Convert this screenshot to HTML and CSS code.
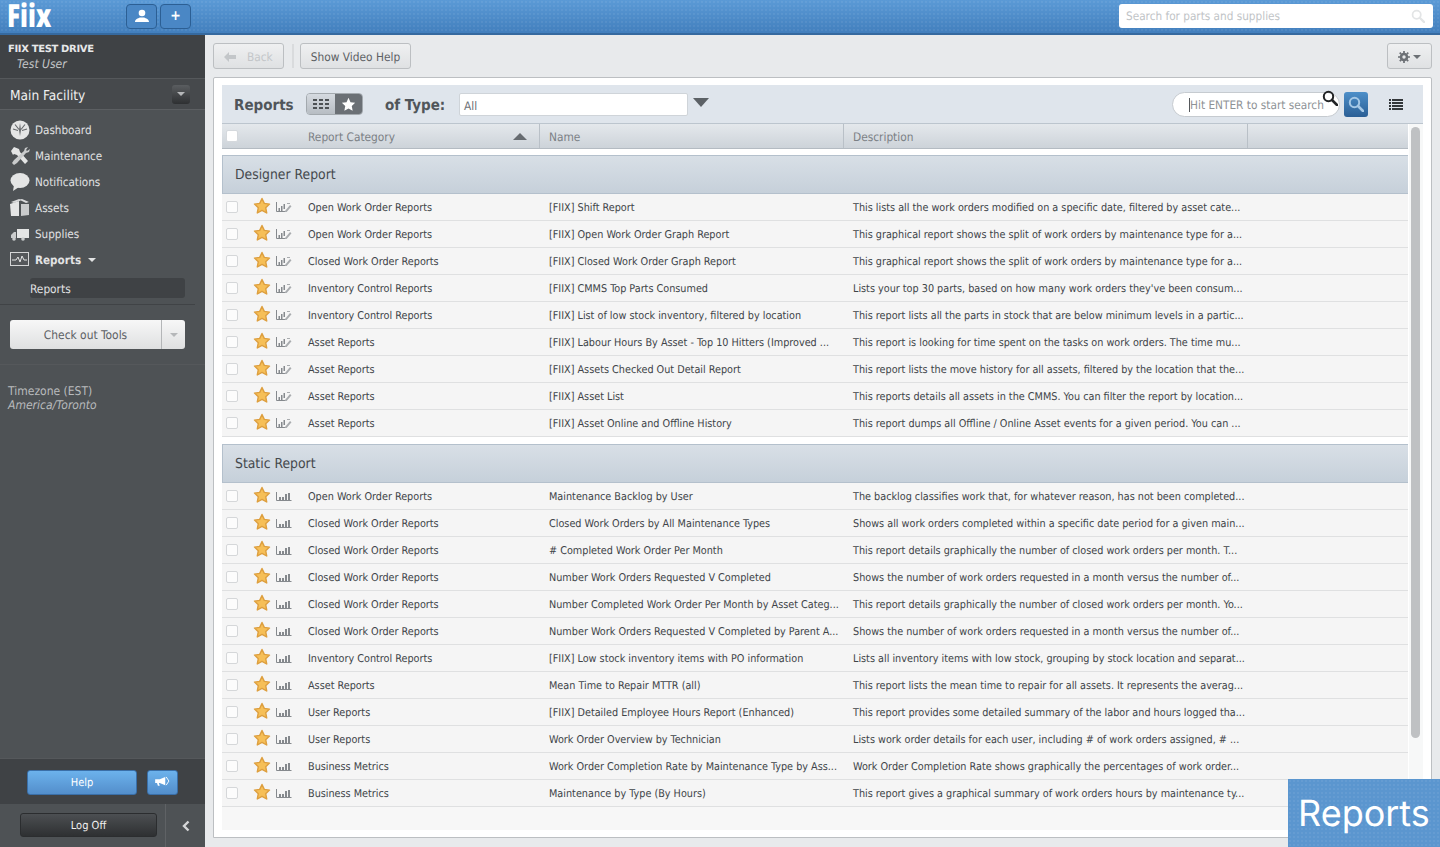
FILE: index.html
```html
<!DOCTYPE html>
<html lang="en">
<head>
<meta charset="UTF-8">
<meta name="viewport" content="width=device-width, initial-scale=1.0">
<title>Reports - Fiix</title>
<link rel="stylesheet" href="styles.css">
</head>
<body>

<svg class="icon-defs" width="0" height="0">
  <symbol id="star" viewBox="0 0 18 18">
    <path d="M9 1.500l2.300 4.900 5.200.7-3.800 3.600 1 5.300L9 13.400 4.300 16l1-5.300-3.800-3.600 5.200-.7z" fill="#f6bf57" stroke="#dd9f3f" stroke-width="1.400" stroke-linejoin="round"/>
  </symbol>
  <symbol id="chart-edit" viewBox="0 0 16 10">
    <path d="M.5 0v9.500h9" fill="none" stroke="#85898d" stroke-width="1"/>
    <path d="M2.500 6h1.500v3H2.500zM5 4h1.500v5H5zM7.500 2h1.500v5H7.500z" fill="#85898d"/>
    <path d="M9 9l5-6 1.500 1.200-5 6-2 .5zM11 1h3v1h-3z" fill="#a9acaf"/>
  </symbol>
  <symbol id="chart" viewBox="0 0 16 10">
    <path d="M.5 1v8.500h15" fill="none" stroke="#85898d" stroke-width="1"/>
    <path d="M3 6h2v3H3zM6 6h2v3H6zM9 3h2v6H9zM12 2h2v7h-2z" fill="#85898d"/>
  </symbol>
  <symbol id="lens" viewBox="0 0 16 16">
    <circle cx="6.500" cy="6.500" r="4.700" fill="none" stroke="currentColor" stroke-width="2"/>
    <path d="M10 10l5 5" stroke="currentColor" stroke-width="2.600" stroke-linecap="round"/>
  </symbol>
</svg>

<header class="topbar">
  <div class="logo-cell"><div class="logo">Fiix</div></div>
  <div class="top-buttons">
    <button class="top-btn">
      <svg width="14" height="14" viewBox="0 0 14 14"><circle cx="7" cy="4" r="3.300" fill="#fff"/><path d="M0 13c0-3 3-3.500 5-4.500h4c2 1 5 1.500 5 4.500z" fill="#fff"/></svg>
    </button>
    <button class="top-btn plus">+</button>
  </div>
  <div class="part-search">
    <span>Search for parts and supplies</span>
    <svg class="part-lens" width="14" height="14"><use href="#lens"/></svg>
  </div>
</header>

<div class="layout">
  <aside class="sidebar">
    <div class="account">
      <div class="account-name">FIIX TEST DRIVE</div>
      <div class="account-user">Test User</div>
    </div>
    <div class="facility">
      <span class="facility-name">Main Facility</span>
      <span class="facility-btn"><i class="caret"></i></span>
    </div>
    <nav class="side-nav">
      <a class="nav-item">
        <svg width="20" height="20" viewBox="0 0 20 20"><circle cx="10" cy="10" r="9.500" fill="#e4e5e5"/><path d="M9 10l1-7 1 7-1 6z" fill="#66696c"/><path d="M5 4.500l4 5M15 4.500l-4 5M3 9l5 1.500M17 9l-5 1.500" stroke="#66696c" stroke-width="1.200"/></svg>
        Dashboard
      </a>
      <a class="nav-item">
        <svg width="20" height="20" viewBox="0 0 20 20"><path d="M1 5l3-4 5 2 1 3 8 9-3 3-8-9-3-1-1 1z" fill="#e4e5e5"/><path d="M18 1l-3 1-1 3-10 9-2 3 2 2 3-2 9-10 3-1 1-3-3 2-1-1z" fill="#c9cbcc"/></svg>
        Maintenance
      </a>
      <a class="nav-item">
        <svg width="20" height="20" viewBox="0 0 20 20"><ellipse cx="10" cy="8.500" rx="9.500" ry="7.500" fill="#e4e5e5"/><path d="M4 13l-1 6 6-4z" fill="#e4e5e5"/></svg>
        Notifications
      </a>
      <a class="nav-item">
        <svg width="20" height="20" viewBox="0 0 20 20"><path d="M0 6l9-3v15H1z" fill="#e4e5e5"/><path d="M11 6h8v11l-8 1z" fill="#c9cbcc"/><path d="M1 4l8-3 3 1-8 3zM12 1l7 3-3 1-6-3z" fill="#d8d9da"/></svg>
        Assets
      </a>
      <a class="nav-item">
        <svg width="20" height="20" viewBox="0 0 20 20"><rect x="7" y="5" width="12" height="9" fill="#e4e5e5"/><path d="M1 11l3-3h2v6H1z" fill="#c9cbcc"/><circle cx="4" cy="15" r="1.800" fill="#c9cbcc"/><circle cx="13" cy="15" r="1.800" fill="#c9cbcc"/></svg>
        Supplies
      </a>
      <a class="nav-item current">
        <svg width="20" height="16" viewBox="0 0 20 16"><rect x=".5" y=".5" width="18" height="13" fill="#55585b" stroke="#d5d6d7"/><path d="M2 8h4l2-3 2 5 2-6 2 4h3" fill="none" stroke="#e4e5e5"/></svg>
        Reports <i class="caret nav-caret"></i>
      </a>
      <a class="sub-item">Reports</a>
    </nav>
    <div class="tools">
      <div class="tools-btn">
        <span class="tools-label">Check out Tools</span>
        <span class="tools-drop"><i class="caret"></i></span>
      </div>
    </div>
    <div class="timezone">
      <div>Timezone (EST)</div>
      <em>America/Toronto</em>
    </div>
    <div class="help-row">
      <button class="help-btn">Help</button>
      <button class="help-btn megaphone">
        <svg width="15" height="11" viewBox="0 0 16 12"><path d="M0 3.500h5L11 1v9L5 7.500H4l1 3H3L2 7.500H0z" fill="#fff"/><path d="M12 1l3 4.500-3 4.500" fill="none" stroke="#fff"/></svg>
      </button>
    </div>
    <div class="logoff-row">
      <div class="logoff-cell"><button class="logoff-btn">Log Off</button></div>
      <div class="collapse-cell">
        <svg width="10" height="12" viewBox="0 0 10 12"><path d="M7.500 1.500L3 6l4.500 4.500" fill="none" stroke="#d6d7d8" stroke-width="2.400"/></svg>
      </div>
    </div>
  </aside>

  <main class="content">
    <div class="actions">
      <button class="act-btn back">
        <svg width="12" height="10" viewBox="0 0 12 10"><path d="M0 5l5-5v3h7v4H5v3z" fill="#c3c6c9"/></svg>
        <span>Back</span>
      </button>
      <span class="act-sep"></span>
      <button class="act-btn video">Show Video Help</button>
      <button class="act-btn gear">
        <svg width="14" height="14" viewBox="0 0 14 14"><circle cx="7" cy="7" r="3.500" fill="none" stroke="#6c7075" stroke-width="3"/><path d="M7 0v14M0 7h14M2 2l10 10M12 2L2 12" stroke="#6c7075" stroke-width="2" stroke-dasharray="2.500 9 2.500"/></svg>
        <i class="caret gear-caret"></i>
      </button>
    </div>

    <section class="panel">
      <div class="toolbar">
        <h1 class="title">Reports</h1>
        <div class="view-toggle">
          <span class="toggle-list">
            <svg width="16" height="10" viewBox="0 0 16 10"><path d="M0 0h4v2H0zM6 0h4v2H6zM12 0h4v2h-4zM0 4h4v2H0zM6 4h4v2H6zM12 4h4v2h-4zM0 8h4v2H0zM6 8h4v2H6zM12 8h4v2h-4z" fill="#4d5154"/></svg>
          </span>
          <span class="toggle-star">
            <svg width="15" height="15" viewBox="0 0 18 18"><path d="M9 1l2.400 5.200 5.600.7-4.100 3.900 1.100 5.600L9 13.700l-5 2.700 1.100-5.600L1 6.900l5.600-.7z" fill="#fff"/></svg>
          </span>
        </div>
        <span class="type-label">of Type:</span>
        <div class="type-select">All</div>
        <i class="type-arrow"></i>
        <div class="search-box">
          <span class="search-cursor"></span><span class="search-hint">Hit ENTER to start search</span>
          <svg class="search-lens" width="16" height="16"><use href="#lens"/></svg>
        </div>
        <button class="search-go"><svg width="16" height="16"><use href="#lens"/></svg></button>
        <svg class="list-icon" width="14" height="11" viewBox="0 0 14 11"><path d="M0 0h2v2H0zM3 0h11v2H3zM0 3h2v2H0zM3 3h11v2H3zM0 6h2v2H0zM3 6h11v2H3zM0 9h2v2H0zM3 9h11v2H3z" fill="#33373a"/></svg>
      </div>

      <div class="table-wrap">
        <div class="table">
          <div class="head row-grid">
            <span class="head-check"><i class="check"></i></span>
            <span class="head-cat">Report Category <i class="sort-arrow"></i></span>
            <span class="head-col">Name</span>
            <span class="head-col desc-head">Description</span>
          </div>

          <div class="group">Designer Report</div>
          <div class="row row-grid"><i class="check"></i><svg class="star"><use href="#star"/></svg><svg class="type-icon"><use href="#chart-edit"/></svg><span>Open Work Order Reports</span><span>[FIIX] Shift Report</span><span>This lists all the work orders modified on a specific date, filtered by asset cate...</span></div>
          <div class="row row-grid"><i class="check"></i><svg class="star"><use href="#star"/></svg><svg class="type-icon"><use href="#chart-edit"/></svg><span>Open Work Order Reports</span><span>[FIIX] Open Work Order Graph Report</span><span>This graphical report shows the split of work orders by maintenance type for a...</span></div>
          <div class="row row-grid"><i class="check"></i><svg class="star"><use href="#star"/></svg><svg class="type-icon"><use href="#chart-edit"/></svg><span>Closed Work Order Reports</span><span>[FIIX] Closed Work Order Graph Report</span><span>This graphical report shows the split of work orders by maintenance type for a...</span></div>
          <div class="row row-grid"><i class="check"></i><svg class="star"><use href="#star"/></svg><svg class="type-icon"><use href="#chart-edit"/></svg><span>Inventory Control Reports</span><span>[FIIX] CMMS Top Parts Consumed</span><span>Lists your top 30 parts, based on how many work orders they've been consum...</span></div>
          <div class="row row-grid"><i class="check"></i><svg class="star"><use href="#star"/></svg><svg class="type-icon"><use href="#chart-edit"/></svg><span>Inventory Control Reports</span><span>[FIIX] List of low stock inventory, filtered by location</span><span>This report lists all the parts in stock that are below minimum levels in a partic...</span></div>
          <div class="row row-grid"><i class="check"></i><svg class="star"><use href="#star"/></svg><svg class="type-icon"><use href="#chart-edit"/></svg><span>Asset Reports</span><span>[FIIX] Labour Hours By Asset - Top 10 Hitters (Improved ...</span><span>This report is looking for time spent on the tasks on work orders. The time mu...</span></div>
          <div class="row row-grid"><i class="check"></i><svg class="star"><use href="#star"/></svg><svg class="type-icon"><use href="#chart-edit"/></svg><span>Asset Reports</span><span>[FIIX] Assets Checked Out Detail Report</span><span>This report lists the move history for all assets, filtered by the location that the...</span></div>
          <div class="row row-grid"><i class="check"></i><svg class="star"><use href="#star"/></svg><svg class="type-icon"><use href="#chart-edit"/></svg><span>Asset Reports</span><span>[FIIX] Asset List</span><span>This reports details all assets in the CMMS. You can filter the report by location...</span></div>
          <div class="row row-grid"><i class="check"></i><svg class="star"><use href="#star"/></svg><svg class="type-icon"><use href="#chart-edit"/></svg><span>Asset Reports</span><span>[FIIX] Asset Online and Offline History</span><span>This report dumps all Offline / Online Asset events for a given period. You can ...</span></div>

          <div class="group static">Static Report</div>
          <div class="row row-grid"><i class="check"></i><svg class="star"><use href="#star"/></svg><svg class="type-icon"><use href="#chart"/></svg><span>Open Work Order Reports</span><span>Maintenance Backlog by User</span><span>The backlog classifies work that, for whatever reason, has not been completed...</span></div>
          <div class="row row-grid"><i class="check"></i><svg class="star"><use href="#star"/></svg><svg class="type-icon"><use href="#chart"/></svg><span>Closed Work Order Reports</span><span>Closed Work Orders by All Maintenance Types</span><span>Shows all work orders completed within a specific date period for a given main...</span></div>
          <div class="row row-grid"><i class="check"></i><svg class="star"><use href="#star"/></svg><svg class="type-icon"><use href="#chart"/></svg><span>Closed Work Order Reports</span><span># Completed Work Order Per Month</span><span>This report details graphically the number of closed work orders per month. T...</span></div>
          <div class="row row-grid"><i class="check"></i><svg class="star"><use href="#star"/></svg><svg class="type-icon"><use href="#chart"/></svg><span>Closed Work Order Reports</span><span>Number Work Orders Requested V Completed</span><span>Shows the number of work orders requested in a month versus the number of...</span></div>
          <div class="row row-grid"><i class="check"></i><svg class="star"><use href="#star"/></svg><svg class="type-icon"><use href="#chart"/></svg><span>Closed Work Order Reports</span><span>Number Completed Work Order Per Month by Asset Categ...</span><span>This report details graphically the number of closed work orders per month. Yo...</span></div>
          <div class="row row-grid"><i class="check"></i><svg class="star"><use href="#star"/></svg><svg class="type-icon"><use href="#chart"/></svg><span>Closed Work Order Reports</span><span>Number Work Orders Requested V Completed by Parent A...</span><span>Shows the number of work orders requested in a month versus the number of...</span></div>
          <div class="row row-grid"><i class="check"></i><svg class="star"><use href="#star"/></svg><svg class="type-icon"><use href="#chart"/></svg><span>Inventory Control Reports</span><span>[FIIX] Low stock inventory items with PO information</span><span>Lists all inventory items with low stock, grouping by stock location and separat...</span></div>
          <div class="row row-grid"><i class="check"></i><svg class="star"><use href="#star"/></svg><svg class="type-icon"><use href="#chart"/></svg><span>Asset Reports</span><span>Mean Time to Repair MTTR (all)</span><span>This report lists the mean time to repair for all assets. It represents the averag...</span></div>
          <div class="row row-grid"><i class="check"></i><svg class="star"><use href="#star"/></svg><svg class="type-icon"><use href="#chart"/></svg><span>User Reports</span><span>[FIIX] Detailed Employee Hours Report (Enhanced)</span><span>This report provides some detailed summary of the labor and hours logged tha...</span></div>
          <div class="row row-grid"><i class="check"></i><svg class="star"><use href="#star"/></svg><svg class="type-icon"><use href="#chart"/></svg><span>User Reports</span><span>Work Order Overview by Technician</span><span>Lists work order details for each user, including # of work orders assigned, # ...</span></div>
          <div class="row row-grid"><i class="check"></i><svg class="star"><use href="#star"/></svg><svg class="type-icon"><use href="#chart"/></svg><span>Business Metrics</span><span>Work Order Completion Rate by Maintenance Type by Ass...</span><span>Work Order Completion Rate shows graphically the percentages of work order...</span></div>
          <div class="row row-grid"><i class="check"></i><svg class="star"><use href="#star"/></svg><svg class="type-icon"><use href="#chart"/></svg><span>Business Metrics</span><span>Maintenance by Type (By Hours)</span><span>This report gives a graphical summary of work orders hours by maintenance ty...</span></div>
          <div class="table-fill"></div>
        </div>
        <div class="scroll-track"><div class="scroll-thumb"></div></div>
      </div>
    </section>
  </main>
</div>

<div class="page-badge">Reports</div>

</body>
</html>
```

FILE: styles.css
```css
* {
  box-sizing: border-box;
}

html, body {
  height: 100%;
}

body {
  margin: 0;
  font-family: 'DejaVu Sans', sans-serif;
  font-stretch: condensed;
  font-size: 10.75px;
  text-rendering: geometricPrecision;
  color: #3e4245;
  background-color: #e8eaec;
  overflow: hidden;
  display: flex;
  flex-direction: column;
}

.icon-defs {
  position: absolute;
}

button {
  font-family: inherit;
  font-stretch: inherit;
  font-size: 11px;
  text-rendering: inherit;
  cursor: pointer;
}

.caret {
  display: inline-block;
  width: 0;
  height: 0;
  border-left: 4px solid transparent;
  border-right: 4px solid transparent;
  border-top: 4px solid #b5b7b9;
}

/* top bar */
.topbar {
  height: 35px;
  flex: none;
  padding-bottom: 1px;
  display: flex;
  align-items: center;
  background-color: #4a87c5;
  background-image: radial-gradient(rgba(255,255,255,.06) 1px, transparent 1px), linear-gradient(#5b9ad6, #427fbd);
  background-size: 4px 4px, auto;
  border-bottom: 2px solid #35699f;
}

.logo-cell {
  width: 126px;
  padding-left: 7px;
}

.logo {
  font-family: 'Open Sans', sans-serif;
  font-stretch: normal;
  font-size: 32px;
  font-weight: 800;
  line-height: 32px;
  color: #fff;
  transform: scaleX(.76);
  transform-origin: left center;
}

.top-buttons {
  display: flex;
  gap: 3px;
}

.top-btn {
  width: 31px;
  height: 25px;
  padding: 0;
  display: flex;
  align-items: center;
  justify-content: center;
  background: #4a87c5;
  border: 1px solid #2c5f94;
  border-radius: 4px;
  color: #fff;
}

.plus {
  font-size: 14px;
  font-weight: 700;
}

.part-search {
  margin: 0 7px 0 auto;
  width: 314px;
  height: 24px;
  padding: 0 8px 0 7px;
  display: flex;
  align-items: center;
  justify-content: space-between;
  background: #fff;
  border-radius: 3px;
  font-size: 11.7px;
  color: #c0c3c6;
}

.part-lens {
  color: #e3e5e6;
}

.layout {
  flex: 1;
  min-height: 0;
  display: flex;
}

/* sidebar */
.sidebar {
  width: 205px;
  flex: none;
  display: flex;
  flex-direction: column;
  background-color: #4e5255;
  color: #e2e3e4;
}

.account {
  height: 44px;
  padding: 8px 8px 0;
  background-color: #3f4245;
  border-bottom: 1px solid #55585b;
}

.account-name {
  font-size: 10px;
  font-stretch: normal;
  font-weight: 700;
  letter-spacing: -.35px;
  line-height: 13px;
  color: #e6e7e8;
}

.account-user {
  padding-left: 9px;
  margin-top: 1px;
  font-size: 12px;
  font-style: italic;
  line-height: 14px;
  color: #c4c6c8;
}

.facility {
  height: 31px;
  padding: 0 15px 0 10px;
  display: flex;
  align-items: center;
  justify-content: space-between;
  font-size: 13.6px;
  color: #f0f0f0;
  background-color: #46494c;
  border-bottom: 1px solid #5c5f62;
}

.facility-name {
  padding-top: 4px;
}

.facility-btn {
  width: 18px;
  height: 19px;
  display: flex;
  align-items: center;
  justify-content: center;
  background: linear-gradient(#5a5d60, #2e3032);
  border-radius: 3px;
}

.side-nav {
  padding: 7px 0 6px;
  margin-right: 10px;
  border-bottom: 1px solid #404346;
}

.nav-item {
  height: 26px;
  padding-left: 10px;
  display: flex;
  align-items: center;
  gap: 5px;
  font-size: 11.6px;
  color: #e2e3e4;
}

.current {
  font-weight: 700;
}

.nav-caret {
  margin-left: 2px;
  border-top-color: #e2e3e4;
}

.sub-item {
  display: block;
  height: 20px;
  margin: 5px 10px 0 30px;
  font-size: 11.8px;
  line-height: 22px;
  background-color: #3f4245;
  border-radius: 3px;
  color: #e2e3e4;
}

.tools {
  height: 60px;
  padding: 15px 20px 0 10px;
  border-bottom: 1px solid #55585b;
}

.tools-btn {
  height: 29px;
  display: flex;
  font-size: 11.9px;
  color: #5c6064;
  background: linear-gradient(#f7f7f7, #dfe0e1);
  border-radius: 3px;
}

.tools-label {
  flex: 1;
  text-align: center;
  line-height: 30px;
  border-right: 1px solid #b4b6b8;
}

.tools-drop {
  width: 23px;
  display: flex;
  align-items: center;
  justify-content: center;
}

.timezone {
  flex: 1;
  padding: 19px 8px 0;
  font-size: 12px;
  line-height: 14px;
  color: #b9bbbd;
}

.help-row {
  height: 46px;
  padding: 11px 0 0 27px;
  display: flex;
  gap: 10px;
  background-color: #3f4245;
  border-top: 1px solid #55585b;
}

.help-btn {
  width: 110px;
  height: 25px;
  padding: 0;
  color: #fff;
  background: linear-gradient(#6cb2ec, #538ecb);
  border: 1px solid #3a6fa8;
  border-radius: 3px;
}

.megaphone {
  width: 31px;
}

.logoff-row {
  height: 43px;
  display: flex;
  background-color: #4e5255;
}

.logoff-cell {
  width: 166px;
  padding: 9px 9px 0 20px;
  border-right: 1px solid #5f6265;
}

.logoff-btn {
  width: 137px;
  height: 24px;
  padding: 1px 0 0;
  color: #f0f0f0;
  background: linear-gradient(#4c4f52, #2e3032);
  border: 1px solid #2b2d2f;
  border-radius: 3px;
}

.collapse-cell {
  flex: 1;
  padding-top: 1px;
  display: flex;
  align-items: center;
  justify-content: center;
}

/* main */
.content {
  flex: 1;
  min-width: 0;
  padding: 8px 8px 9px;
  display: flex;
  flex-direction: column;
}

.actions {
  height: 26px;
  margin-bottom: 8px;
  display: flex;
  align-items: stretch;
}

.act-btn {
  padding: 1px 10px 0;
  font-size: 11.8px;
  color: #5c6064;
  background: linear-gradient(#eff0f1, #dfe1e3);
  border: 1px solid #bcbfc2;
  border-radius: 3px;
}

.back {
  width: 71px;
  display: flex;
  align-items: center;
  gap: 11px;
  color: #c3c6c9;
}

.act-sep {
  width: 2px;
  margin: 1px 6px 1px 8px;
  background-color: #d9dbdd;
}

.video {
  width: 111px;
  padding: 1px 0 0;
}

.gear {
  margin-left: auto;
  width: 45px;
  display: flex;
  align-items: center;
  gap: 3px;
}

.gear-caret {
  border-top-color: #6c7075;
}

.panel {
  flex: 1;
  min-height: 0;
  padding: 7px 8px 0;
  background-color: #fff;
  border: 1px solid #bcbfc2;
  border-radius: 2px 2px 0 0;
}

.toolbar {
  height: 39px;
  padding: 0 0 0 12px;
  display: flex;
  align-items: center;
  background-color: #dfe5ec;
  border-bottom: 1px solid #bcc5ce;
}

.title {
  width: 72px;
  margin: 0;
  padding-top: 1px;
  font-size: 15px;
  font-weight: 700;
  color: #50555a;
}

.view-toggle {
  width: 57px;
  height: 22px;
  display: flex;
  overflow: hidden;
  border-radius: 4px;
  border: 1px solid #a3a9ae;
}

.toggle-list {
  flex: 1;
  display: flex;
  align-items: center;
  justify-content: center;
  background: linear-gradient(#d5dae0, #b7bdc3);
}

.toggle-star {
  width: 27px;
  display: flex;
  align-items: center;
  justify-content: center;
  background-color: #6b7075;
}

.type-label {
  width: 74px;
  margin-left: 22px;
  padding-top: 1px;
  font-size: 15px;
  font-weight: 700;
  color: #50555a;
}

.type-select {
  width: 229px;
  height: 23px;
  padding-left: 4px;
  font-size: 11.8px;
  line-height: 25px;
  color: #6c7075;
  background-color: #fff;
  border: 1px solid #cfd4d9;
  border-radius: 2px;
}

.type-arrow {
  margin: -4px 0 0 5px;
  border-left: 8px solid transparent;
  border-right: 8px solid transparent;
  border-top: 9px solid #5c6166;
}

.search-box {
  position: relative;
  width: 168px;
  height: 25px;
  margin-left: auto;
  padding: 1px 0 0 16px;
  display: flex;
  align-items: center;
  font-size: 11.75px;
  color: #8e9296;
  background-color: #fff;
  border: 1px solid #c6cbd0;
  border-radius: 13px;
  white-space: nowrap;
}

.search-cursor {
  width: 1px;
  height: 14px;
  background-color: #55585b;
}

.search-lens {
  position: absolute;
  top: -3px;
  right: 1px;
  color: #222426;
}

.search-go {
  width: 24px;
  height: 25px;
  margin: 0 21px 0 4px;
  padding: 0;
  display: flex;
  align-items: center;
  justify-content: center;
  color: #a5c8e6;
  background: linear-gradient(#4d8fc9, #2b5f95);
  border: none;
  border-radius: 3px;
}

.list-icon {
  margin-right: 20px;
}

.table-wrap {
  position: relative;
  height: 706px;
  padding-right: 15px;
  overflow: hidden;
}

.row-grid {
  display: grid;
  grid-template-columns: 32px 22px 32px 241px 304px 1fr;
  align-items: center;
}

.head {
  height: 25px;
  font-size: 11.8px;
  color: #7b8085;
  background: linear-gradient(#e4e8ec, #cdd3d9);
  border-bottom: 1px solid #b4bbc2;
}

.head-check {
  grid-column: 1 / 4;
  padding-left: 4px;
  display: flex;
}

.head-check .check {
  margin-left: 0;
  background-color: #fff;
  border-color: #d5d9dd;
}

.head-cat {
  display: flex;
  align-items: center;
  justify-content: space-between;
  height: 100%;
  padding: 1px 12px 0 0;
  border-right: 1px solid #b9c0c7;
  margin-right: 9px;
}

.sort-arrow {
  border-left: 7px solid transparent;
  border-right: 7px solid transparent;
  border-bottom: 7px solid #666b70;
}

.head-col {
  display: flex;
  align-items: center;
  height: 100%;
  padding-top: 1px;
  border-right: 1px solid #b9c0c7;
  margin-right: 9px;
}

.desc-head {
  width: 395px;
}

.check {
  display: block;
  width: 12px;
  height: 12px;
  margin-left: 4px;
  background-color: #fcfcfc;
  border: 1px solid #d5d7d9;
  border-radius: 2px;
}

.group {
  height: 39px;
  margin-top: 6px;
  padding-left: 12px;
  font-size: 13.8px;
  line-height: 39px;
  color: #44484c;
  background: linear-gradient(#d8dfe6, #c6d0da);
  border: 1px solid #b4c0cc;
  border-width: 1px 0 1px 1px;
}

.static {
  margin-top: 7px;
}

.row {
  height: 27px;
  color: #404448;
  background-color: #f5f5f5;
  border-bottom: 1px solid #dfe0e1;
  white-space: nowrap;
}

.star {
  width: 18px;
  height: 18px;
  margin: -2px 0 0 -1px;
}

.type-icon {
  width: 16px;
  height: 10px;
}

.table-fill {
  height: 30px;
  background-color: #f7f7f7;
}

.scroll-track {
  position: absolute;
  top: 0;
  right: 0;
  width: 14px;
  height: 100%;
  padding: 3px 2px;
  background-color: #f7f8f8;
}

.scroll-thumb {
  width: 9px;
  height: 611px;
  background-color: #bfc1c3;
  border-radius: 5px;
}

.page-badge {
  position: absolute;
  right: 0;
  bottom: 0;
  width: 152px;
  height: 68px;
  padding-left: 10px;
  font-family: 'Inter', sans-serif;
  font-stretch: normal;
  font-size: 36px;
  line-height: 68px;
  color: #fff;
  background-color: #5b96cf;
  background-image: radial-gradient(rgba(255,255,255,.06) 1px, transparent 1px);
  background-size: 4px 4px;
}
```
